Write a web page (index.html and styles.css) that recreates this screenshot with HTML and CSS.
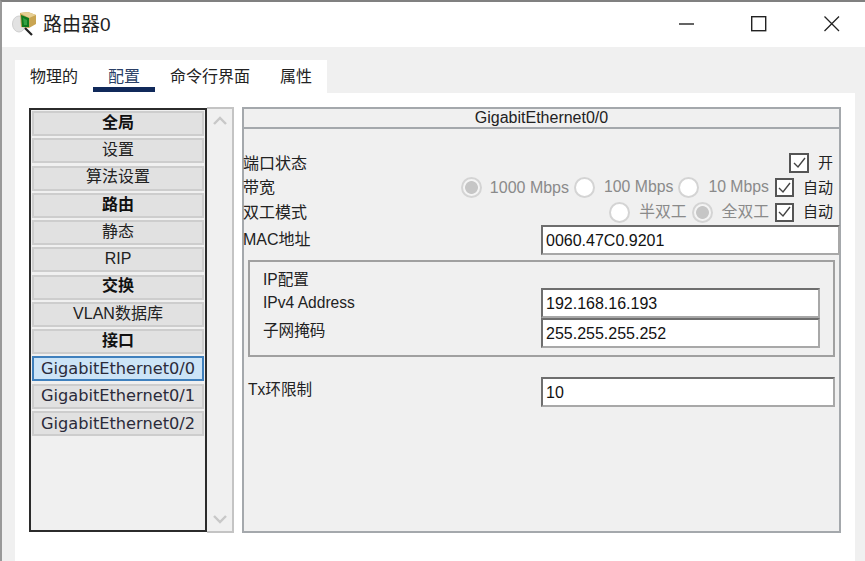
FILE: index.html
```html
<!DOCTYPE html>
<html lang="zh">
<head>
<meta charset="utf-8">
<title>路由器0</title>
<link rel="stylesheet" href="styles.css">
</head>
<body>
<div class="window">
  <header class="titlebar">
    <svg class="app-icon" width="26" height="26" viewBox="0 0 26 26">
      <ellipse cx="7" cy="13" rx="6.5" ry="8" fill="#e2e2e2" stroke="#cfcfcf"/>
      <path d="M8 2 16 1 24 4 24 13 17 17 9 16Z" fill="#c9a552"/>
      <path d="M8 2 16 1 24 4 17 7Z" fill="#e6cf94"/>
      <path d="M9 4 17 7 17 16 10 16Z" fill="#0f7a1e"/>
      <path d="M11 7 15 9 15 14 12 14Z" fill="#35a040"/>
      <path d="M13 17 20 24" stroke="#222" stroke-width="2.2" fill="none"/>
    </svg>
    <h1 class="title">路由器0</h1>
    <div class="controls">
      <svg width="16" height="16" viewBox="0 0 16 16"><path d="M1 8H16" stroke="#222" stroke-width="1.4"/></svg>
      <svg width="16" height="16" viewBox="0 0 16 16"><rect x="0.7" y="0.7" width="14" height="14" fill="none" stroke="#222" stroke-width="1.4"/></svg>
      <svg width="16" height="16" viewBox="0 0 16 16"><path d="M0.5 0.5 15 15M15 0.5 0.5 15" stroke="#222" stroke-width="1.3"/></svg>
    </div>
  </header>
  <div class="client">
    <nav class="tabs">
      <span class="tab">物理的</span>
      <span class="tab tab-active">配置</span>
      <span class="tab">命令行界面</span>
      <span class="tab">属性</span>
    </nav>
    <main class="sheet">
      <div class="side">
        <div class="list">
          <div class="item item-head">全局</div>
          <div class="item">设置</div>
          <div class="item">算法设置</div>
          <div class="item item-head">路由</div>
          <div class="item">静态</div>
          <div class="item">RIP</div>
          <div class="item item-head">交换</div>
          <div class="item">VLAN数据库</div>
          <div class="item item-head">接口</div>
          <div class="item item-port item-selected">GigabitEthernet0/0</div>
          <div class="item item-port">GigabitEthernet0/1</div>
          <div class="item item-port">GigabitEthernet0/2</div>
        </div>
        <div class="scroll">
          <svg width="16" height="10" viewBox="0 0 16 10"><path d="M2 8 8 2 14 8" fill="none" stroke="#c8c8c8" stroke-width="2.4"/></svg>
          <svg width="16" height="10" viewBox="0 0 16 10"><path d="M2 2 8 8 14 2" fill="none" stroke="#c8c8c8" stroke-width="2.4"/></svg>
        </div>
      </div>
      <section class="panel">
        <div class="panel-head">GigabitEthernet0/0</div>
        <div class="panel-body">
          <div class="row">
            <span class="label">端口状态</span>
            <span class="check check-large"><svg width="14" height="12" viewBox="0 0 14 12"><path d="M2 6 6 10 13 1" fill="none" stroke="#444" stroke-width="1.4"/></svg></span>
            <span class="check-text">开</span>
          </div>
          <div class="row">
            <span class="label">带宽</span>
            <span class="radio radio-on"></span><span class="opt opt-1000">1000 Mbps</span>
            <span class="radio"></span><span class="opt opt-100">100 Mbps</span>
            <span class="radio"></span><span class="opt opt-10">10 Mbps</span>
            <span class="check"><svg width="14" height="12" viewBox="0 0 14 12"><path d="M2 6 6 10 13 1" fill="none" stroke="#444" stroke-width="1.4"/></svg></span>
            <span class="check-text">自动</span>
          </div>
          <div class="row">
            <span class="label">双工模式</span>
            <span class="radio"></span><span class="opt opt-half">半双工</span>
            <span class="radio radio-on"></span><span class="opt opt-full">全双工</span>
            <span class="check"><svg width="14" height="12" viewBox="0 0 14 12"><path d="M2 6 6 10 13 1" fill="none" stroke="#444" stroke-width="1.4"/></svg></span>
            <span class="check-text">自动</span>
          </div>
          <div class="row row-field">
            <span class="label">MAC地址</span>
            <div class="field field-mac">0060.47C0.9201</div>
          </div>
          <div class="group">
            <div class="group-title">IP配置</div>
            <div class="row row-field">
              <span class="field-label field-label-low">IPv4 Address</span>
              <div class="field field-ip">192.168.16.193</div>
            </div>
            <div class="row row-field">
              <span class="field-label">子网掩码</span>
              <div class="field field-ip">255.255.255.252</div>
            </div>
          </div>
          <div class="row row-field row-tx">
            <span class="field-label">Tx环限制</span>
            <div class="field field-tx">10</div>
          </div>
        </div>
      </section>
    </main>
  </div>
</div>
</body>
</html>
```
FILE: styles.css
```css
* { box-sizing: border-box; }
html, body { margin: 0; height: 100%; }
body {
  width: 865px;
  height: 561px;
  overflow: hidden;
  background: #fff;
  color: #222;
  font: 15.5px/1.2 "Liberation Sans", "Noto Sans CJK SC", sans-serif;
}
.window {
  height: 561px;
  display: flex;
  flex-direction: column;
  border-top: 2px solid #808080;
  border-left: 2px solid #999;
}
.titlebar {
  height: 45px;
  flex: none;
  display: flex;
  align-items: center;
  background: #fff;
  padding-left: 10px;
}
.app-icon { margin-top: -1px; }
.title {
  margin: 2px 0 0 5px;
  font-size: 19px;
  font-weight: 400;
}
.controls {
  margin: -2px 25px 0 auto;
  display: flex;
  gap: 57px;
}
.client {
  flex: 1;
  min-height: 0;
  display: flex;
  flex-direction: column;
  background: #f0f0f0;
  padding: 13px 10px 0 13px;
}
.tabs {
  height: 33px;
  flex: none;
  align-self: flex-start;
  display: flex;
  background: #fff;
}
.tab {
  padding: 0 15px;
  height: 33px;
  line-height: 34px;
  font-size: 16px;
}
.tab-active {
  color: #2a3f66;
  border-bottom: 5px solid #10295a;
  height: 32px;
}
.sheet {
  flex: 1;
  min-height: 0;
  display: flex;
  gap: 8px;
  background: #fff;
  padding: 14px 14px 28px;
  align-items: stretch;
}
.side {
  display: flex;
  flex: none;
  width: 205px;
}
.list {
  width: 178px;
  flex: none;
  margin: 1px 0;
  border: 2px solid #2b2b2b;
  background: #f0f0f0;
  padding: 1px 1px 0;
  display: flex;
  flex-direction: column;
  gap: 2.25px;
}
.item {
  height: 25px;
  flex: none;
  display: flex;
  align-items: center;
  justify-content: center;
  padding-bottom: 2px;
  background: #e1e1e1;
  border: 2px solid #cdcdcd;
  font-size: 16px;
  color: #222;
}
.item-head { font-weight: 700; color: #111; }
.item-port {
  padding-bottom: 0;
  font-family: "DejaVu Sans", sans-serif;
  font-size: 16.2px;
  color: #2b2b3a;
  white-space: nowrap;
}
.item-selected {
  background: #cce4f7;
  border-color: #3f80bd;
}
.scroll {
  width: 27px;
  flex: none;
  background: #f0f0f0;
  border: 2px solid #c4c4c4;
  border-left: 0;
  display: flex;
  flex-direction: column;
  justify-content: space-between;
  align-items: center;
  padding: 7px 0 7px;
}
.panel {
  width: 599px;
  flex: none;
  display: flex;
  flex-direction: column;
  background: #f0f0f0;
  border: 2px solid #a4a8ac;
}
.panel-head {
  height: 20px;
  flex: none;
  text-align: center;
  line-height: 18px;
  font-size: 16px;
  border-bottom: 2px solid #a4a8ac;
}
.panel-body {
  padding-top: 22px;
  font-size: 16px;
}
.row {
  height: 24.5px;
  display: flex;
  align-items: center;
  justify-content: flex-end;
  padding-right: 6px;
}
.label { margin-left: -1px; margin-right: auto; }
.check-text { margin-left: 9px; font-size: 15px; }
.check {
  width: 19px;
  height: 19px;
  flex: none;
  display: flex;
  align-items: center;
  justify-content: center;
  border: 2px solid #555;
  background: #fff;
  margin-left: 6px;
}
.check-large { width: 20px; height: 20px; }
.radio {
  width: 21px;
  height: 21px;
  flex: none;
  border-radius: 50%;
  border: 2px solid #d4d4d4;
  background: #fff;
}
.radio-on {
  background: radial-gradient(circle, #c6c6c6 0 6px, #f4f4f4 6.8px);
}
.opt {
  color: #8a8a8a;
  white-space: nowrap;
  margin-left: 9px;
  font-size: 15.8px;
}
.opt-1000 { margin: 0 5px 0 8px; font-size: 16px; }
.opt-100 { margin-right: 5px; }
.opt-half { margin-right: 5px; }
.row-field {
  height: 30px;
  padding-right: 0;
}
.field-label {
  margin-right: auto;
  margin-bottom: 2px;
  font-size: 15.6px;
}
.field-label-low { margin-bottom: 0; margin-top: 2px; }
.field {
  height: 30px;
  display: flex;
  align-items: center;
  padding: 2px 0 0 3px;
  background: #fff;
  font-size: 16px;
  color: #111;
  border: 2px solid #a8a8a8;
  border-top-color: #6e6e6e;
  border-left-color: #6e6e6e;
}
.field-mac { width: 299px; margin-right: -1px; }
.field-ip { width: 279px; }
.field-tx { width: 294px; }
.group {
  margin: 5px 4px 0;
  height: 97px;
  padding: 8px 13px 0;
  border: 2px solid #a0a0a0;
}
.group-title { height: 18px; line-height: 19px; font-size: 15.6px; }
.row-tx { margin: 20px 4px 0; }
```
